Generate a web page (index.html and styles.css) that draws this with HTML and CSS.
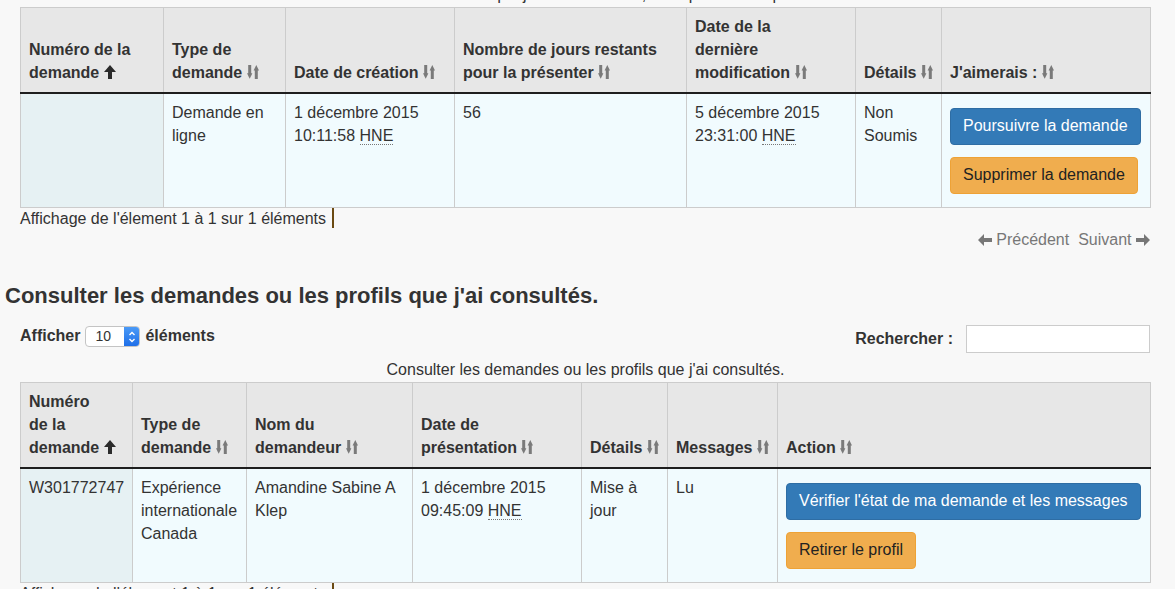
FILE: index.html
```html
<!DOCTYPE html>
<html lang="fr">
<head>
<meta charset="utf-8">
<title>Demandes</title>
<link rel="stylesheet" href="styles.css">
</head>
<body>
<div class="page">
  <section class="dt dt-first">
    <table class="grid">
      <caption>Consulter les demandes que j'ai commencées, mais pas encore présentées.</caption>
      <colgroup>
        <col class="w143"><col class="w122"><col class="w169"><col class="w232"><col class="w169"><col class="w86"><col class="w209">
      </colgroup>
      <thead>
        <tr>
          <th>Numéro de la<br>demande <svg class="ic-up" viewBox="0 0 12 14"><polygon points="6,0 12,7 8,7 8,14 4,14 4,7 0,7"/></svg></th>
          <th>Type de<br>demande <svg class="ic-sort" viewBox="0 0 12 14"><rect x="1.2" y="0" width="3" height="9"/><polygon points="0,8.2 5.4,8.2 2.7,13.8"/><polygon points="6.6,5.6 12,5.6 9.3,0"/><rect x="7.8" y="5" width="3" height="9"/></svg></th>
          <th>Date de création <svg class="ic-sort" viewBox="0 0 12 14"><rect x="1.2" y="0" width="3" height="9"/><polygon points="0,8.2 5.4,8.2 2.7,13.8"/><polygon points="6.6,5.6 12,5.6 9.3,0"/><rect x="7.8" y="5" width="3" height="9"/></svg></th>
          <th>Nombre de jours restants<br>pour la présenter <svg class="ic-sort" viewBox="0 0 12 14"><rect x="1.2" y="0" width="3" height="9"/><polygon points="0,8.2 5.4,8.2 2.7,13.8"/><polygon points="6.6,5.6 12,5.6 9.3,0"/><rect x="7.8" y="5" width="3" height="9"/></svg></th>
          <th>Date de la<br>dernière<br>modification <svg class="ic-sort" viewBox="0 0 12 14"><rect x="1.2" y="0" width="3" height="9"/><polygon points="0,8.2 5.4,8.2 2.7,13.8"/><polygon points="6.6,5.6 12,5.6 9.3,0"/><rect x="7.8" y="5" width="3" height="9"/></svg></th>
          <th>Détails <svg class="ic-sort" viewBox="0 0 12 14"><rect x="1.2" y="0" width="3" height="9"/><polygon points="0,8.2 5.4,8.2 2.7,13.8"/><polygon points="6.6,5.6 12,5.6 9.3,0"/><rect x="7.8" y="5" width="3" height="9"/></svg></th>
          <th>J'aimerais : <svg class="ic-sort" viewBox="0 0 12 14"><rect x="1.2" y="0" width="3" height="9"/><polygon points="0,8.2 5.4,8.2 2.7,13.8"/><polygon points="6.6,5.6 12,5.6 9.3,0"/><rect x="7.8" y="5" width="3" height="9"/></svg></th>
        </tr>
      </thead>
      <tbody>
        <tr>
          <td class="sorted"></td>
          <td>Demande en ligne</td>
          <td>1 décembre 2015<br>10:11:58 <abbr class="tz" title="Heure normale de l'Est">HNE</abbr></td>
          <td>56</td>
          <td>5 décembre 2015<br>23:31:00 <abbr class="tz" title="Heure normale de l'Est">HNE</abbr></td>
          <td>Non Soumis</td>
          <td>
            <div class="actions">
              <button class="btn btn-primary" type="button">Poursuivre la demande</button>
              <button class="btn btn-warning" type="button">Supprimer la demande</button>
            </div>
          </td>
        </tr>
      </tbody>
    </table>
    <div class="info">Affichage de l'élement 1 à 1 sur 1 éléments <span class="caret"></span></div>
    <div class="pager">
      <a class="pager-link" href="#"><svg class="ic-arrow" viewBox="0 0 14 12"><polygon points="0,6 6,0 6,4 14,4 14,8 6,8 6,12"/></svg> Précédent</a>
      <a class="pager-link" href="#">Suivant <svg class="ic-arrow" viewBox="0 0 14 12"><polygon points="14,6 8,0 8,4 0,4 0,8 8,8 8,12"/></svg></a>
    </div>
  </section>

  <h2 class="title">Consulter les demandes ou les profils que j'ai consultés.</h2>

  <div class="controls">
    <div class="length">Afficher
      <span class="select"><span class="select-val">10</span><span class="stepper"><svg viewBox="0 0 8 14"><polyline points="1.5,5 4,2.5 6.5,5"/><polyline points="1.5,9 4,11.5 6.5,9"/></svg></span></span>
      éléments</div>
    <label class="search">Rechercher : <input class="search-input" type="text"></label>
  </div>

  <section class="dt">
    <table class="grid">
      <caption>Consulter les demandes ou les profils que j'ai consultés.</caption>
      <colgroup>
        <col class="w112"><col class="w114"><col class="w166"><col class="w169"><col class="w86"><col class="w110"><col class="w373">
      </colgroup>
      <thead>
        <tr>
          <th>Numéro<br>de la<br>demande <svg class="ic-up" viewBox="0 0 12 14"><polygon points="6,0 12,7 8,7 8,14 4,14 4,7 0,7"/></svg></th>
          <th>Type de<br>demande <svg class="ic-sort" viewBox="0 0 12 14"><rect x="1.2" y="0" width="3" height="9"/><polygon points="0,8.2 5.4,8.2 2.7,13.8"/><polygon points="6.6,5.6 12,5.6 9.3,0"/><rect x="7.8" y="5" width="3" height="9"/></svg></th>
          <th>Nom du<br>demandeur <svg class="ic-sort" viewBox="0 0 12 14"><rect x="1.2" y="0" width="3" height="9"/><polygon points="0,8.2 5.4,8.2 2.7,13.8"/><polygon points="6.6,5.6 12,5.6 9.3,0"/><rect x="7.8" y="5" width="3" height="9"/></svg></th>
          <th>Date de<br>présentation <svg class="ic-sort" viewBox="0 0 12 14"><rect x="1.2" y="0" width="3" height="9"/><polygon points="0,8.2 5.4,8.2 2.7,13.8"/><polygon points="6.6,5.6 12,5.6 9.3,0"/><rect x="7.8" y="5" width="3" height="9"/></svg></th>
          <th>Détails <svg class="ic-sort" viewBox="0 0 12 14"><rect x="1.2" y="0" width="3" height="9"/><polygon points="0,8.2 5.4,8.2 2.7,13.8"/><polygon points="6.6,5.6 12,5.6 9.3,0"/><rect x="7.8" y="5" width="3" height="9"/></svg></th>
          <th>Messages <svg class="ic-sort" viewBox="0 0 12 14"><rect x="1.2" y="0" width="3" height="9"/><polygon points="0,8.2 5.4,8.2 2.7,13.8"/><polygon points="6.6,5.6 12,5.6 9.3,0"/><rect x="7.8" y="5" width="3" height="9"/></svg></th>
          <th>Action <svg class="ic-sort" viewBox="0 0 12 14"><rect x="1.2" y="0" width="3" height="9"/><polygon points="0,8.2 5.4,8.2 2.7,13.8"/><polygon points="6.6,5.6 12,5.6 9.3,0"/><rect x="7.8" y="5" width="3" height="9"/></svg></th>
        </tr>
      </thead>
      <tbody>
        <tr>
          <td class="sorted">W301772747</td>
          <td>Expérience internationale Canada</td>
          <td>Amandine Sabine A Klep</td>
          <td>1 décembre 2015<br>09:45:09 <abbr class="tz" title="Heure normale de l'Est">HNE</abbr></td>
          <td>Mise à jour</td>
          <td>Lu</td>
          <td>
            <div class="actions">
              <button class="btn btn-primary" type="button">Vérifier l'état de ma demande et les messages</button>
              <button class="btn btn-warning" type="button">Retirer le profil</button>
            </div>
          </td>
        </tr>
      </tbody>
    </table>
    <div class="info">Affichage de l'élement 1 à 1 sur 1 éléments <span class="caret"></span></div>
  </section>
</div>
</body>
</html>
```

FILE: styles.css
```css
html {
  overflow: hidden;
}

body {
  margin: 0;
  background: #f8f8f8;
  font-family: "Liberation Sans", Arial, Helvetica, sans-serif;
  font-size: 16px;
  line-height: 1.42857;
  color: #333;
}

.page {
  padding: 0 25px 0 5px;
}

.dt {
  margin-left: 15px;
}

.dt-first {
  margin-top: -16px;
}

.grid {
  width: 100%;
  border-collapse: collapse;
  table-layout: fixed;
  border: 1px solid #ccc;
}

.grid caption {
  text-align: center;
  padding: 0;
  color: #333;
}

.w86 { width: 86px; }
.w110 { width: 110px; }
.w112 { width: 112px; }
.w114 { width: 114px; }
.w122 { width: 122px; }
.w143 { width: 143px; }
.w166 { width: 166px; }
.w169 { width: 169px; }
.w209 { width: 209px; }
.w232 { width: 232px; }
.w373 { width: 373px; }

.grid th,
.grid td {
  border: 1px solid #ccc;
  padding: 8px;
  text-align: left;
  vertical-align: top;
}

.grid th {
  background: #e7e7e7;
  vertical-align: bottom;
  font-weight: bold;
  border-bottom: 2px solid #1e1e1e;
  white-space: nowrap;
}

.grid td {
  background: #f1fbfe;
}

.grid td.sorted {
  background: #e6f1f3;
}

.ic-sort {
  width: 12px;
  height: 14px;
  fill: #7a7a7a;
  vertical-align: -1px;
}

.ic-up {
  width: 12px;
  height: 14px;
  fill: #2b2b2b;
  vertical-align: -1px;
}

.tz {
  text-decoration: none;
  border-bottom: 1px dotted #777;
}

.actions {
  display: flex;
  flex-direction: column;
  align-items: flex-start;
  gap: 12px;
  padding: 6px 0 5px;
}

.btn {
  display: inline-block;
  padding: 6px 12px;
  font-family: inherit;
  font-size: 16px;
  line-height: 1.42857;
  border: 1px solid transparent;
  border-radius: 4px;
  cursor: pointer;
  white-space: nowrap;
}

.btn-primary {
  background: #337ab7;
  border-color: #2e6da4;
  color: #fff;
}

.btn-warning {
  background: #f0ad4e;
  border-color: #eea236;
  color: #222;
}

.info {
  height: 23px;
}

.caret {
  display: inline-block;
  width: 0;
  height: 20px;
  border-left: 2px solid #6b4a12;
  vertical-align: -4px;
  margin-left: 1px;
}

.pager {
  display: flex;
  justify-content: flex-end;
  gap: 9px;
  margin-top: -2px;
}

.pager-link {
  color: #777;
  text-decoration: none;
}

.ic-arrow {
  width: 14px;
  height: 12px;
  fill: #777;
  vertical-align: -1px;
}

.title {
  margin: 32px 0 0;
  font-size: 22px;
  line-height: 1.1;
  font-weight: bold;
  color: #333;
}

.controls {
  display: flex;
  justify-content: space-between;
  align-items: center;
  margin: 17px 0 6px 15px;
  height: 28px;
}

.length {
  font-weight: bold;
  display: flex;
  align-items: center;
  gap: 5px;
  margin-top: -5px;
}

.select {
  display: inline-flex;
  width: 55px;
  height: 21px;
  border: 1px solid #c4c4c4;
  border-radius: 4px;
  background: #fff;
  box-sizing: border-box;
  overflow: hidden;
  font-weight: normal;
  font-size: 14px;
  line-height: 19px;
}

.select-val {
  flex: 1;
  padding-left: 9px;
}

.stepper {
  width: 15px;
  background: linear-gradient(#4a9af7, #1f6fe8);
  display: flex;
  align-items: center;
  justify-content: center;
}

.stepper svg {
  width: 8px;
  height: 14px;
  fill: none;
  stroke: #fff;
  stroke-width: 1.4;
}

.search {
  font-weight: bold;
  display: flex;
  align-items: center;
  gap: 13px;
}

.search-input {
  width: 184px;
  height: 28px;
  box-sizing: border-box;
  border: 1px solid #ccc;
  background: #fff;
  margin: 0;
  padding: 0 6px;
}
```
